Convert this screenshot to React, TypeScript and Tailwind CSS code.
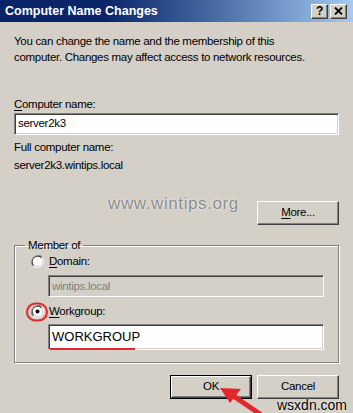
const sunken =
  "border border-t-[#808080] border-l-[#808080] border-b-white border-r-white shadow-[inset_1px_1px_0_#404040,inset_-1px_-1px_0_#d4d0c8]";
const raised =
  "border border-t-white border-l-white border-b-[#404040] border-r-[#404040] shadow-[inset_-1px_-1px_0_#808080]";

function Radio({ checked }: { checked?: boolean }) {
  return (
    <svg width="13" height="13" viewBox="0 0 12 12" className="shrink-0">
      <path d="M10.2 1.8A6 6 0 0 0 1.8 10.2" fill="none" stroke="#808080" strokeWidth="1" />
      <path d="M9.5 2.5A5 5 0 0 0 2.5 9.5" fill="none" stroke="#404040" strokeWidth="1" />
      <path d="M1.8 10.2A6 6 0 0 0 10.2 1.8" fill="none" stroke="#ffffff" strokeWidth="1" />
      <path d="M2.5 9.5A5 5 0 0 0 9.5 2.5" fill="none" stroke="#d4d0c8" strokeWidth="1" />
      <circle cx="6" cy="6" r="4.4" fill="#ffffff" />
      {checked && <circle cx="6" cy="6" r="1.8" fill="#000000" />}
    </svg>
  );
}

function TitleButton({ children }: { children: React.ReactNode }) {
  return (
    <div
      className={`flex h-[15px] w-[17px] items-center justify-center bg-[#d4d0c8] text-[12px] font-bold leading-none text-black ${raised}`}
    >
      {children}
    </div>
  );
}

export default function App() {
  return (
    <div
      className="relative h-[413px] w-[353px] overflow-hidden bg-[#d4d0c8] text-[11.5px] tracking-[-0.3px] text-black"
      style={{ fontFamily: '"Liberation Sans", Arial, sans-serif' }}
    >
      <div className="flex h-[22px] items-center justify-between bg-gradient-to-r from-[#0a246a] from-30% to-[#a6caf0] pl-[5px] pr-[6px]">
        <span className="text-[12.5px] font-bold tracking-normal text-white">Computer Name Changes</span>
        <div className="flex gap-[2px]">
          <TitleButton>?</TitleButton>
          <TitleButton>
            <svg width="9" height="8" viewBox="0 0 9 8">
              <path d="M1 0.5L8 7.5M8 0.5L1 7.5" stroke="#000" strokeWidth="1.8" />
            </svg>
          </TitleButton>
        </div>
      </div>

      <div className="flex flex-col px-[14px]">
        <p className="mt-[11px] leading-[16px]">
          You can change the name and the membership of this
          <br />
          computer. Changes may affect access to network resources.
        </p>

        <div className="mt-[31px] leading-[16px]">
          <span className="underline underline-offset-2">C</span>omputer name:
        </div>
        <div className={`mt-[1px] flex h-[22px] items-center bg-white px-[3px] ${sunken}`}>server2k3</div>

        <div className="mt-[3px] leading-[18px]">Full computer name:</div>
        <div className="leading-[18px]">server2k3.wintips.local</div>

        <div className="mt-[27px] flex items-start justify-between">
          <span className="ml-[94px] mt-[-7px] text-[17px] leading-[20px] tracking-[0.6px] text-[#8c8c8c] [text-shadow:0_0_2px_#fff]">
            www.wintips.org
          </span>
          <button className={`flex h-[24px] w-[82px] items-center justify-center bg-[#d4d0c8] ${raised}`}>
            <span>
              <span className="underline underline-offset-2">M</span>ore...
            </span>
          </button>
        </div>

        <fieldset className="mt-[12px] border border-[#808080] pb-[12px] pl-[16px] pr-[14px] pt-0 shadow-[1px_1px_0_#fff,inset_1px_1px_0_#fff]">
          <legend className="ml-[-6px] px-[3px] leading-[16px]">Member of</legend>
          <div className="flex items-center gap-[5px]">
            <Radio />
            <span>
              <span className="underline underline-offset-2">D</span>omain:
            </span>
          </div>
          <div className={`mt-[5px] ml-[17px] flex h-[22px] items-center bg-[#d4d0c8] px-[3px] text-[#808080] ${sunken}`}>
            wintips.local
          </div>
          <div className="relative mt-[6px] flex items-center gap-[5px]">
            <Radio checked />
            <span>
              <span className="underline underline-offset-2">W</span>orkgroup:
            </span>
            <div className="absolute left-[-5px] top-1/2 h-[19px] w-[22px] -translate-y-1/2 rounded-full border-2 border-[#e2262b]" />
          </div>
          <div className={`relative mt-[3px] ml-[17px] flex h-[26px] items-center bg-white px-[3px] text-[13px] tracking-normal ${sunken}`}>
            WORKGROUP
            <div className="absolute bottom-[-1px] left-[1px] h-[2px] w-[85px] bg-[#e2262b]" />
          </div>
        </fieldset>

        <div className="mt-[12px] flex justify-end gap-[5px]">
          <div className="border border-black">
            <button className={`flex h-[22px] w-[80px] items-center justify-center bg-[#d4d0c8] ${raised}`}>OK</button>
          </div>
          <button className={`flex h-[24px] w-[82px] items-center justify-center bg-[#d4d0c8] ${raised}`}>Cancel</button>
        </div>
      </div>

      <span className="absolute left-[277px] top-[395px] text-[14px] tracking-normal text-black [text-shadow:0_0_2px_#fff]">
        wsxdn.com
      </span>

      <svg className="absolute left-[214px] top-[382px]" width="50" height="32" viewBox="0 0 50 32">
        <path d="M46 32L18 13" stroke="#e2262b" strokeWidth="5" strokeLinecap="round" />
        <path d="M6 6L27 7L16 21Z" fill="#e2262b" />
      </svg>
    </div>
  );
}
